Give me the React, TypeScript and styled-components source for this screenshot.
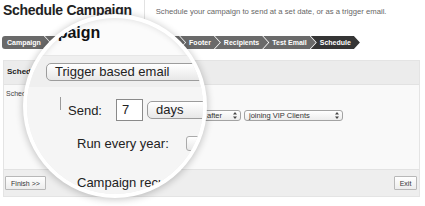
import React from "react";
import styled, { createGlobalStyle } from "styled-components";

const Global = createGlobalStyle`
  html, body {
    margin: 0;
    padding: 0;
    background: #fff;
    font-family: "Liberation Sans", Arial, sans-serif;
    overflow: hidden;
  }
`;

// pagina de fundo
const Page = styled.div`
  position: relative;
  width: 425px;
  height: 206px;
`;

const Header = styled.div`
  display: flex;
  align-items: flex-start;
  height: 28px;
  padding-left: 3px;
`;

const Title = styled.h1`
  margin: 0;
  font-size: 14px;
  line-height: 20px;
  letter-spacing: -0.3px;
  font-weight: bold;
  color: #222;
  white-space: nowrap;
`;

const Divider = styled.span`
  width: 1px;
  height: 22px;
  background: #e2e2e2;
  margin: 0 11px 0 12px;
`;

const Description = styled.p`
  margin: 0;
  font-size: 7.7px;
  line-height: 24px;
  color: #666;
  white-space: nowrap;
`;

const Steps = styled.div`
  display: flex;
  margin: 8px 0 0 2px;
  height: 13px;
`;

const Step = styled.div<{ $first?: boolean; $active?: boolean }>`
  height: 13px;
  line-height: 13px;
  font-size: 7px;
  font-weight: bold;
  color: #fff;
  white-space: nowrap;
  background: ${(p) => (p.$active ? "#353535" : "#6a6a6a")};
  padding: ${(p) => (p.$first ? "0 9px 0 5px" : "0 9px")};
  margin-left: ${(p) => (p.$first ? "0" : "-5px")};
  border-radius: ${(p) => (p.$first ? "3px 0 0 3px" : "0")};
  clip-path: ${(p) =>
    p.$first
      ? "polygon(0 0, calc(100% - 6px) 0, 100% 50%, calc(100% - 6px) 100%, 0 100%)"
      : "polygon(0 0, calc(100% - 6px) 0, 100% 50%, calc(100% - 6px) 100%, 0 100%, 6px 50%)"};
`;

const Panel = styled.div`
  margin: 11px 5px 0 3px;
  border: 1px solid #e4e4e4;
`;

const PanelHeader = styled.div`
  height: 23px;
  line-height: 21px;
  background: #ececec;
  font-size: 8px;
  font-weight: bold;
  color: #222;
  padding-left: 3px;
`;

const PanelBody = styled.div`
  height: 86px;
  background: #f9f9f9;
  border-top: 1px solid #e2e2e2;
  border-bottom: 1px solid #e2e2e2;
  box-sizing: border-box;
`;

const BodyLabel = styled.div`
  font-size: 7px;
  color: #444;
  padding: 5px 2px 0;
`;

const FieldRow = styled.div`
  display: flex;
  align-items: center;
  gap: 3px;
  margin-top: 12px;
  padding-left: 40px;
`;

const FieldLabel = styled.span`
  width: 77px;
  font-size: 7.5px;
  color: #333;
`;

const SmallInput = styled.span`
  width: 18px;
  height: 13px;
  border: 1px solid #999;
  background: #fff;
  box-sizing: border-box;
`;

const SmallSelect = styled.div<{ $w: number }>`
  width: ${(p) => p.$w}px;
  height: 11px;
  box-sizing: border-box;
  border: 1px solid #a3a3a3;
  border-radius: 3px;
  background: linear-gradient(#ffffff, #ececec);
  display: flex;
  align-items: center;
  justify-content: space-between;
  padding: 0 3px 0 4px;
  font-size: 7.5px;
  color: #333;
  white-space: nowrap;
`;

const PanelFooter = styled.div`
  height: 26px;
  background: #eeeeee;
  display: flex;
  align-items: center;
  justify-content: space-between;
  padding: 0 2px 0 1px;
`;

const Button = styled.button<{ $w: number }>`
  width: ${(p) => p.$w}px;
  height: 14px;
  padding: 0;
  border: 1px solid #b8b8b8;
  border-radius: 1px;
  background: linear-gradient(#ffffff, #ededed);
  font-family: "Liberation Sans", Arial, sans-serif;
  font-size: 7px;
  color: #333;
`;

// lupa
const Lens = styled.div`
  position: absolute;
  left: 27px;
  top: 18px;
  width: 176px;
  height: 176px;
  border-radius: 50%;
  overflow: hidden;
  background: #fbfbfb;
  box-shadow: 0 0 0 4px #fff, 0 1px 7px 5px rgba(0, 0, 0, 0.2),
    inset 0 0 6px rgba(0, 0, 0, 0.12);
`;

const LensTitle = styled.div`
  height: 37px;
  box-sizing: border-box;
  padding-top: 5px;
  margin-left: -4px;
  font-size: 16px;
  line-height: 20px;
  font-weight: bold;
  color: #111;
  white-space: nowrap;
`;

const LensHeader = styled.div`
  height: 32px;
  box-sizing: border-box;
  background: #efefef;
  border-top: 1px solid #e6e6e6;
  display: flex;
  align-items: flex-start;
  padding: 7px 0 0 11px;
  gap: 8px;
`;

const Marker = styled.span`
  width: 3px;
  height: 16px;
  margin-top: 1px;
  background: #777;
`;

const BigSelect = styled.div<{ $w: number }>`
  flex: none;
  width: ${(p) => p.$w}px;
  height: 18px;
  box-sizing: border-box;
  border: 1px solid #9c9c9c;
  border-radius: 5px;
  background: linear-gradient(#ffffff, #e7e7e7);
  padding-left: 8px;
  font-size: 13px;
  line-height: 16px;
  color: #222;
  white-space: nowrap;
`;

const LensBody = styled.div`
  background: #f5f5f5;
  height: 110px;
  padding-top: 12px;
  box-sizing: border-box;
`;

const LensRow = styled.div<{ $indent: number; $top?: number }>`
  display: flex;
  align-items: center;
  height: 22px;
  padding-left: ${(p) => p.$indent}px;
  margin-top: ${(p) => p.$top ?? 0}px;
`;

const TreeCorner = styled.span`
  align-self: flex-start;
  width: 10px;
  height: 13px;
  margin: -2px 7px 0 0;
  border-left: 1px solid #9a9a9a;
  border-bottom: 1px solid #9a9a9a;
  box-sizing: border-box;
`;

const LensLabel = styled.span<{ $gap: number }>`
  font-size: 13px;
  color: #222;
  white-space: nowrap;
  margin-right: ${(p) => p.$gap}px;
`;

const NumberBox = styled.span`
  flex: none;
  width: 27px;
  height: 22px;
  box-sizing: border-box;
  border: 1px solid #8a8a8a;
  background: #fff;
  padding-left: 5px;
  font-size: 13px;
  line-height: 20px;
  color: #222;
  margin-right: 4px;
`;

const Checkbox = styled.span`
  flex: none;
  width: 14px;
  height: 15px;
  box-sizing: border-box;
  border: 1px solid #aaa;
  border-radius: 3px;
  background: linear-gradient(#fff, #e8e8e8);
`;

const Arrows = () => (
  <svg width="4" height="7" viewBox="0 0 4 7">
    <path d="M2 0 L4 2.6 L0 2.6 Z M2 7 L4 4.4 L0 4.4 Z" fill="#444" />
  </svg>
);

const steps = ["Campaign", "Template", "Content", "Header Text", "Footer", "Recipients", "Test Email", "Schedule"];

const App = () => {
  return (
    <Page>
      <Global />
      <Header>
        <Title>Schedule Campaign</Title>
        <Divider />
        <Description>Schedule your campaign to send at a set date, or as a trigger email.</Description>
      </Header>
      <Steps>
        {steps.map((s, i) => (
          <Step key={s} $first={i === 0} $active={i === steps.length - 1}>
            {s}
          </Step>
        ))}
      </Steps>
      <Panel>
        <PanelHeader>Schedule</PanelHeader>
        <PanelBody>
          <BodyLabel>Schedule type:</BodyLabel>
          <FieldRow>
            <FieldLabel>Send:</FieldLabel>
            <SmallInput />
            <SmallSelect $w={54}>
              days <Arrows />
            </SmallSelect>
            <SmallSelect $w={39}>
              after <Arrows />
            </SmallSelect>
            <SmallSelect $w={99}>
              joining VIP Clients <Arrows />
            </SmallSelect>
          </FieldRow>
        </PanelBody>
        <PanelFooter>
          <Button $w={41}>Finish &gt;&gt;</Button>
          <Button $w={23}>Exit</Button>
        </PanelFooter>
      </Panel>

      <Lens>
        <LensTitle>Campaign</LensTitle>
        <LensHeader>
          <Marker />
          <BigSelect $w={200}>Trigger based email</BigSelect>
        </LensHeader>
        <LensBody>
          <LensRow $indent={33}>
            <TreeCorner />
            <LensLabel $gap={14}>Send:</LensLabel>
            <NumberBox>7</NumberBox>
            <BigSelect $w={90}>days</BigSelect>
          </LensRow>
          <LensRow $indent={50} $top={11}>
            <LensLabel $gap={17}>Run every year:</LensLabel>
            <Checkbox />
          </LensRow>
          <LensRow $indent={50} $top={17}>
            <LensLabel $gap={0}>Campaign recurrence:</LensLabel>
          </LensRow>
        </LensBody>
      </Lens>
    </Page>
  );
};

export default App;
